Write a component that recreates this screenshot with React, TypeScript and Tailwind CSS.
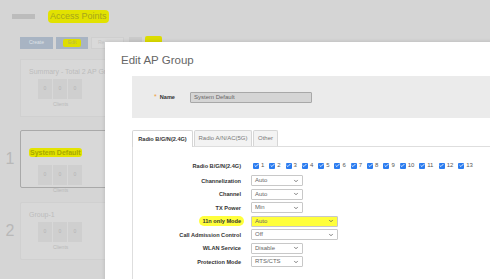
import { ChevronDown, Check } from "lucide-react";

const channels = ["1", "2", "3", "4", "5", "6", "7", "8", "9", "10", "11", "12", "13"];

function Select({ value, wide, hl }: { value: string; wide?: boolean; hl?: boolean }) {
	return (
		<div
			className={`flex items-center justify-between h-[11px] border border-[#c8c8c8] rounded-[1px] px-[3px] text-[6px] text-[#666] ${wide ? "w-[87px]" : "w-[52px]"} ${hl ? "bg-[#ffff3c]" : "bg-white"}`}
		>
			<span>{value}</span>
			<ChevronDown className="size-[6px] text-[#555]" strokeWidth={3} />
		</div>
	);
}

function Row({ label, hl, children }: { label: string; hl?: boolean; children: React.ReactNode }) {
	return (
		<div className="flex items-center h-[13.5px]">
			<div className="w-[118px] flex justify-end pr-[10px]">
				<span className={`text-[5.6px] font-bold text-[#333] ${hl ? "bg-[#ffff3c] px-[3px] -mr-[3px] rounded-full py-[1px]" : ""}`}>
					{label}
				</span>
			</div>
			{children}
		</div>
	);
}

function Zeros() {
	return (
		<div className="flex gap-[1px] mt-[3px] ml-[9px]">
			{["0", "0", "0"].map((z, i) => (
				<div key={i} className="w-[14px] h-[20px] bg-[#cfcfcf] flex items-center justify-center text-[5px] text-[#b4b4b4]">
					{z}
				</div>
			))}
		</div>
	);
}

function Card({ title, num, selected, hl }: { title: string; num?: string; selected?: boolean; hl?: boolean }) {
	return (
		<div className="flex items-center">
			<div className="w-[20px] text-center text-[16px] text-[#b8b8b8]">{num}</div>
			<div
				className={`w-[100px] h-[58px] rounded-[2px] pl-[8px] pt-[7px] bg-[#d8d8d8] border ${selected ? "border-[#a9a9a9]" : "border-[#d0d0d0]"}`}
			>
				<p className={`text-[7px] leading-[9px] ${hl ? "text-[#a8a800] font-bold bg-[#e3e300] inline-block px-[1px] rounded-[3px]" : "text-[#bcbcbc]"}`}>
					{title}
				</p>
				<Zeros />
				<p className="text-[5px] text-[#b8b8b8] ml-[24px] mt-[2px]">Clients</p>
			</div>
		</div>
	);
}

export default function App() {
	return (
		<div className="relative w-[490px] h-[279px] overflow-hidden bg-[#d5d5d5] font-['Liberation_Sans',Arial,sans-serif]">
			{/* page behind the dialog */}
			<div className="flex items-center pt-[10px] pl-[12px] gap-[13px]">
				<div className="w-[23px] h-[5px] bg-[#bcbcbc]" />
				<span className="text-[9px] leading-[13px] text-[#a6a61c] bg-[#e2e200] px-[2px] rounded-[4px]">Access Points</span>
			</div>
			<div className="flex items-center gap-[3px] pl-[20px] mt-[14px]">
				<div className="w-[33px] h-[12px] bg-[#a8b4c3] flex items-center justify-center text-[5px] text-[#dfe3e8]">Create</div>
				<div className="w-[32px] h-[12px] bg-[#a8b4c3] flex items-center justify-center">
					<span className="text-[5px] text-[#b9b94a] bg-[#dede00] px-[5px] rounded-[2px]">Edit</span>
				</div>
				<div className="w-[33px] h-[12px] bg-[#d9d9d9] border border-[#cfcfcf] flex items-center pl-[6px] text-[5px] text-[#c4c4c4]">Re</div>
				<div className="w-[13px] h-[8px] bg-[#cacaca] ml-[2px] self-start" />
				<div className="w-[17px] h-[9px] bg-[#dcdc00] rounded-[2px] self-start -mt-[1px]" />
			</div>
			<div className="pl-[20px] mt-[10px]">
				<div className="w-[100px] h-[58px] border border-[#d0d0d0] bg-[#d8d8d8] pl-[8px] pt-[7px]">
					<p className="text-[7px] leading-[9px] text-[#bcbcbc] whitespace-nowrap">Summary - Total 2 AP Groups</p>
					<Zeros />
					<p className="text-[5px] text-[#b8b8b8] ml-[24px] mt-[2px]">Clients</p>
				</div>
			</div>
			<div className="flex flex-col gap-[14px] mt-[13px]">
				<Card title="System Default" num="1" selected hl />
				<Card title="Group-1" num="2" />
			</div>

			{/* dialog */}
			<div className="absolute left-[105px] top-[42px] w-[400px] h-[250px] bg-white shadow-[0_0_4px_rgba(0,0,0,0.15)]">
				<h2 className="pl-[16px] pt-[10px] text-[11.5px] leading-[16px] text-[#666]">Edit AP Group</h2>
				<div className="ml-[27px] mt-[8px] h-[42px] bg-[#ebebeb] flex items-center pl-[22px]">
					<span className="text-[7px] text-[#f0a040] mr-[3px]">*</span>
					<span className="text-[5.6px] font-bold text-[#333]">Name</span>
					<div className="ml-[15px] w-[122px] h-[11px] bg-[#d5d5d5] border border-[#a8a8a8] rounded-[1px] pl-[3px] flex items-center text-[6px] text-[#666]">
						System Default
					</div>
				</div>
				<div className="ml-[27px] mt-[12px]">
					<div className="flex items-end border-b border-[#dedede] h-[17px]">
						<div className="h-[17px] w-[61px] justify-center border border-b-0 border-[#d6d6d6] rounded-t-[2px] bg-white -mb-[1px] flex items-center text-[5.6px] font-bold text-[#333]">
							Radio B/G/N(2.4G)
						</div>
						<div className="h-[16px] w-[58px] justify-center border border-b-0 border-[#d6d6d6] rounded-t-[2px] bg-[#f3f3f3] ml-[1px] flex items-center text-[6px] text-[#777]">
							Radio A/N/AC(5G)
						</div>
						<div className="h-[16px] w-[25px] justify-center border border-b-0 border-[#d6d6d6] rounded-t-[2px] bg-[#f3f3f3] ml-[1px] flex items-center text-[6px] text-[#777]">
							Other
						</div>
					</div>
					<div className="border-l border-[#dedede] h-[150px] pt-[12px]">
						<div className="mb-[1.5px]">
							<Row label="Radio B/G/N(2.4G)">
								<div className="flex items-center ml-[2px]">
									{channels.map((c) => (
										<div key={c} className={`flex items-center ${c.length > 1 ? "w-[19.5px]" : "w-[16.3px]"}`}>
											<div className="w-[6px] h-[6px] bg-[#2b7cf0] rounded-[1px] flex items-center justify-center">
												<Check className="size-[5px] text-white" strokeWidth={4} />
											</div>
											<span className="ml-[2px] text-[6px] text-[#555]">{c}</span>
										</div>
									))}
								</div>
							</Row>
						</div>
						<Row label="Channelization">
							<Select value="Auto" />
						</Row>
						<Row label="Channel">
							<Select value="Auto" />
						</Row>
						<Row label="TX Power">
							<Select value="Min" />
						</Row>
						<Row label="11n only Mode" hl>
							<Select value="Auto" wide hl />
						</Row>
						<Row label="Call Admission Control">
							<Select value="Off" wide />
						</Row>
						<Row label="WLAN Service">
							<Select value="Disable" />
						</Row>
						<Row label="Protection Mode">
							<Select value="RTS/CTS" />
						</Row>
					</div>
				</div>
			</div>
		</div>
	);
}
